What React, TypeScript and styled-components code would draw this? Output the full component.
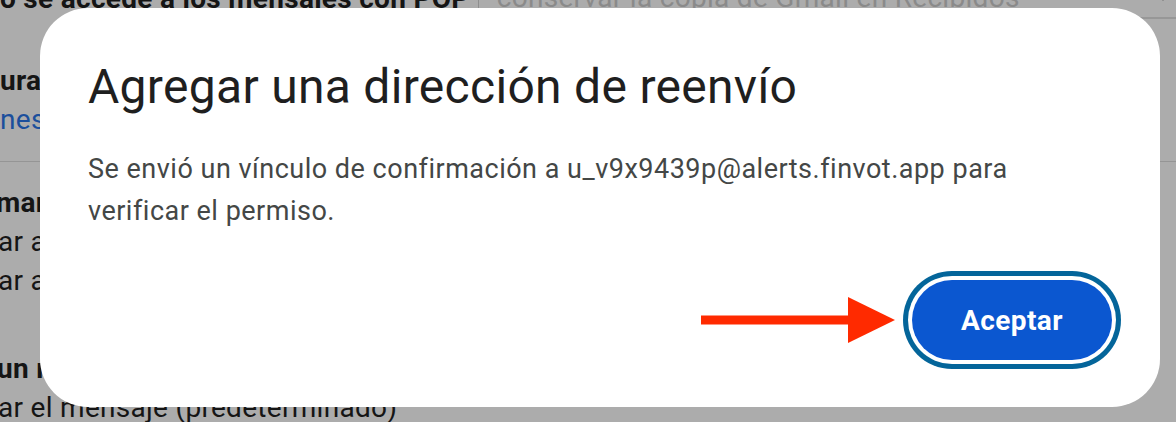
import React from 'react';
import styled, { createGlobalStyle } from 'styled-components';

const GlobalStyle = createGlobalStyle`
  html, body {
    margin: 0;
    padding: 0;
    overflow: hidden;
  }
  body {
    background: #acacac;
    font-family: Roboto, 'Liberation Sans', sans-serif;
  }
`;

// Settings page behind the dialog, already dimmed by the scrim
const Page = styled.div`
  position: relative;
  width: 1176px;
  height: 422px;
  overflow: hidden;
  background: #acacac;
  color: #151515;
  font-size: 28px;
  line-height: 39px;
  letter-spacing: 0.3px;
`;

const Section = styled.div<{ $top?: number }>`
  margin-top: ${(p) => p.$top ?? 0}px;
  display: flex;
  flex-direction: column;
`;

const Row = styled.div<{ $bold?: boolean; $shift?: number }>`
  display: flex;
  align-items: center;
  white-space: nowrap;
  font-weight: ${(p) => (p.$bold ? 700 : 400)};
  margin-left: ${(p) => p.$shift ?? 0}px;
`;

const LinkText = styled.span`
  color: #1b4f9c;
`;

const Select = styled.div`
  flex: 1;
  display: flex;
  align-items: center;
  justify-content: space-between;
  margin-left: 8px;
  padding: 0 8px 0 18px;
  border-left: 1px solid #8e8e8e;
  border-bottom: 2px solid #979797;
  color: #8a8a8a;
  font-weight: 400;
`;

const Chevron = styled.span`
  width: 0;
  height: 0;
  border-left: 5px solid transparent;
  border-right: 5px solid transparent;
  border-top: 6px solid #6a6a6a;
`;

const Divider = styled.hr`
  margin: 22px 0 0;
  border: none;
  border-top: 1px solid #959595;
`;

// Confirmation dialog
const Dialog = styled.div`
  position: absolute;
  left: 40px;
  top: 8px;
  width: 1120px;
  height: 399px;
  box-sizing: border-box;
  padding: 52px 48px 47px;
  display: flex;
  flex-direction: column;
  background: #fff;
  border-radius: 48px;
`;

const Title = styled.h2`
  margin: 0;
  font-size: 48px;
  line-height: 54px;
  font-weight: 400;
  color: #1f1f1f;
`;

const Message = styled.p`
  margin: 34px 0 0;
  font-size: 27px;
  line-height: 42px;
  letter-spacing: 0.5px;
  color: #444746;
  max-width: 960px;
`;

const Actions = styled.div`
  margin-top: auto;
  display: flex;
  justify-content: flex-end;
  align-items: center;
`;

const Pointer = styled.svg`
  display: block;
  margin-right: 17px;
`;

const PrimaryButton = styled.button`
  width: 200px;
  height: 80px;
  border: none;
  border-radius: 40px;
  background: #0b57d0;
  color: #fff;
  font-family: Roboto, 'Liberation Sans', sans-serif;
  font-size: 28px;
  font-weight: 700;
  letter-spacing: 0.4px;
  box-shadow: 0 0 0 4px #fff, 0 0 0 9px #04659a;
  cursor: pointer;
`;

export default function App() {
  return (
    <>
      <GlobalStyle />
      <Page>
        <Section $top={-22}>
          <Row $bold>
            o se accede a los mensajes con POP
            <Select>
              conservar la copia de Gmail en Recibidos
              <Chevron />
            </Select>
          </Row>
        </Section>
        <Section $top={42}>
          <Row $bold>ura tu</Row>
          <Row>
            <LinkText>nes de</LinkText>
          </Row>
        </Section>
        <Divider />
        <Section $top={21}>
          <Row $bold $shift={-4}>mar</Row>
          <Row $shift={-2}>ar auto</Row>
          <Row $shift={-2}>ar auto</Row>
        </Section>
        <Section $top={49}>
          <Row $bold $shift={-3}>un mensaje</Row>
          <Row $shift={-2}>ar el mensaje (predeterminado)</Row>
        </Section>

        <Dialog role="dialog">
          <Title>Agregar una dirección de reenvío</Title>
          <Message>
            Se envió un vínculo de confirmación a u_v9x9439p@alerts.finvot.app para
            verificar el permiso.
          </Message>
          <Actions>
            <Pointer width="194" height="46" viewBox="0 0 194 46">
              <rect x="0" y="18.5" width="148" height="9" fill="#ff2a00" />
              <polygon points="147,0 194,23 147,46" fill="#ff2a00" />
            </Pointer>
            <PrimaryButton>Aceptar</PrimaryButton>
          </Actions>
        </Dialog>
      </Page>
    </>
  );
}
